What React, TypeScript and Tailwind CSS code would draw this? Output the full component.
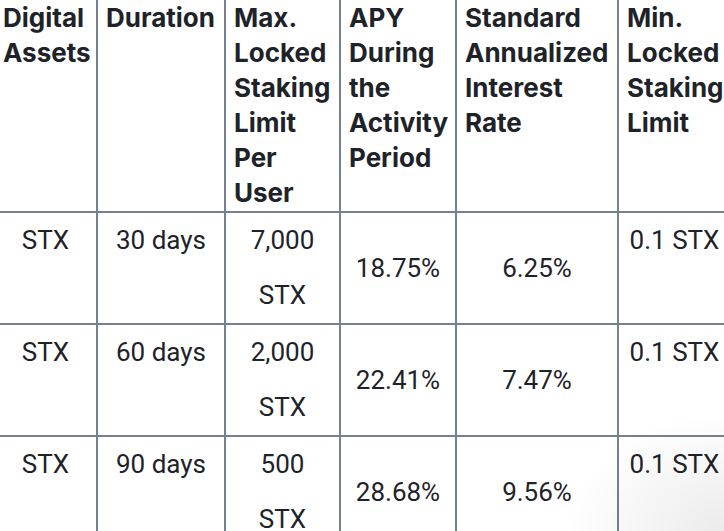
import React from "react";

const headers = [
  ["Digital", "Assets"],
  ["Duration"],
  ["Max.", "Locked", "Staking", "Limit", "Per", "User"],
  ["APY", "During", "the", "Activity", "Period"],
  ["Standard", "Annualized", "Interest", "Rate"],
  ["Min.", "Locked", "Staking", "Limit"],
];

const rows = [
  ["STX", "30 days", "7,000", "18.75%", "6.25%", "0.1 STX"],
  ["STX", "60 days", "2,000", "22.41%", "7.47%", "0.1 STX"],
  ["STX", "90 days", "500", "28.68%", "9.56%", "0.1 STX"],
];

export default function App() {
  const bd = "border-2 border-[#76808f]";
  const th =
    `${bd} align-top text-left px-[8px] py-0 font-bold text-[26px] leading-[35px] text-[#1e2329]`;
  const tdTop = `${bd} align-top text-center p-0 text-[26px] leading-[55px] text-[#1e2329]`;
  const tdMid = `${bd} align-middle text-center p-0 text-[26px] leading-[55px] text-[#1e2329]`;
  return (
    <div className="w-[724px] h-[531px] overflow-hidden bg-white relative">
      <table
        className="table-fixed border-collapse ml-[-7px] mt-[-2px] w-[737px]"
        style={{ fontFamily: "Roboto, 'Liberation Sans', sans-serif" }}
      >
        <colgroup>
          <col className="w-[103px]" />
          <col className="w-[128px]" />
          <col className="w-[115px]" />
          <col className="w-[116px]" />
          <col className="w-[162px]" />
          <col className="w-[113px]" />
        </colgroup>
        <thead>
          <tr className="h-[213px]">
            {headers.map((h, i) => (
              <th
                key={i}
                className={th}
                style={{ fontFamily: "Inter, 'Noto Sans', sans-serif" }}
              >
                {h.map((w, j) => (
                  <div key={j}>{w}</div>
                ))}
              </th>
            ))}
          </tr>
        </thead>
        <tbody>
          {rows.map((r, i) => (
            <tr key={i}>
              <td className={tdTop}>{r[0]}</td>
              <td className={tdTop}>{r[1]}</td>
              <td className={tdTop}>
                <div>{r[2]}</div>
                <div>STX</div>
              </td>
              <td className={tdMid}>{r[3]}</td>
              <td className={tdMid}>{r[4]}</td>
              <td className={tdTop}>{r[5]}</td>
            </tr>
          ))}
        </tbody>
      </table>
      <div className="absolute right-0 bottom-0 w-[160px] h-[120px] pointer-events-none bg-[radial-gradient(ellipse_at_bottom_right,rgba(0,0,0,0.08),rgba(0,0,0,0)_70%)]" />
    </div>
  );
}
